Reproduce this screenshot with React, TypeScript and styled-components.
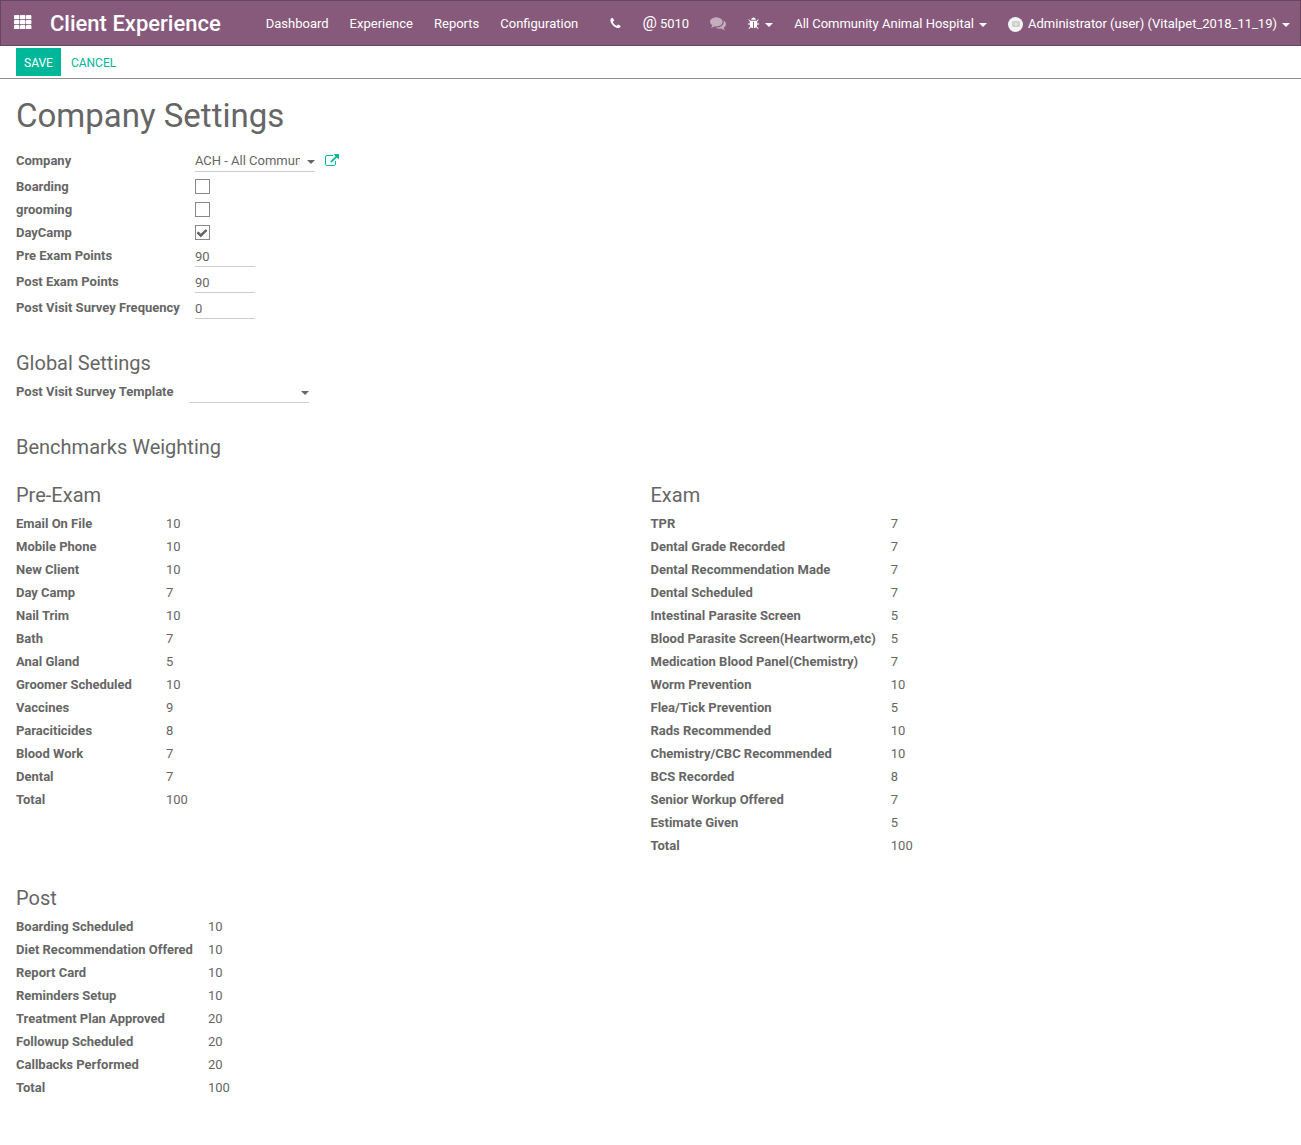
import React, { useState } from "react";
import styled, { createGlobalStyle } from "styled-components";

const GlobalStyle = createGlobalStyle`
  *, *::before, *::after { box-sizing: border-box; }
  body {
    margin: 0;
    background: #fff;
    color: #666;
    font-family: Roboto, "Liberation Sans", sans-serif;
    font-size: 13px;
    line-height: 23px;
  }
  button, input, select { font: inherit; color: inherit; }
`;

const paths = {
  phone:
    "M1600 1240q0 27-10 70.5t-21 68.5q-21 50-122 106-94 51-186 51-27 0-53-3.5t-57.5-12.5-47-14.5-55.5-20.5-49-18q-98-35-175-83-127-79-264-216t-216-264q-48-77-83-175-3-9-18-49t-20.5-55.5-14.5-47-12.5-57.5-3.5-53q0-92 51-186 56-101 106-122 25-11 68.5-21t70.5-10q14 0 21 3 18 6 53 76 11 19 30 54t35 63.5 31 53.5q3 4 17.5 25t21.5 35.5 7 28.5q0 20-28.5 50t-62 55-62 53-28.5 46q0 9 5 22.5t8.5 20.5 14 24 11.5 19q76 137 174 235t235 174q2 1 19 11.5t24 14 20.5 8.5 22.5 5q18 0 46-28.5t53-62 55-62 50-28.5q14 0 28.5 7t35.5 21.5 25 17.5q25 15 53.5 31t63.5 35 54 30q70 35 76 53 3 7 3 21z",
  comments:
    "M1408 768q0 139-94 257t-256.5 186.5-353.5 68.5q-86 0-176-16-124 88-278 128-36 9-86 16h-3q-11 0-20.5-8t-11.5-21q-1-3-1-6.5t.5-6.5 2-6l2.5-5 3.5-5.5 4-5 4.5-5 4-4.5q5-6 23-25t26-29.5 22.5-29 25-38.5 20.5-44q-124-72-195-177t-71-224q0-139 94-257t256.5-186.5 353.5-68.5 353.5 68.5 256.5 186.5 94 257zm384 256q0 120-71 224.5t-195 176.5q10 24 20.5 44t25 38.5 22.5 29 26 29.5 23 25q1 1 4 4.5t4.5 5 4 5 3.5 5.5l2.5 5 2 6 .5 6.5-1 6.5q-3 14-13 22t-22 7q-50-7-86-16-154-40-278-128-90 16-176 16-271 0-472-132 58 4 88 4 161 0 309-45t264-129q125-92 192-212t67-254q0-77-23-152 129 71 204 178t75 230z",
  bug:
    "M1696 960q0 26-19 45t-45 19h-224q0 171-67 290l208 209q19 19 19 45t-19 45q-18 19-45 19t-45-19l-198-197q-5 5-15 13t-42 28.5-65 36.5-82 29-97 13v-896h-128v896q-51 0-101.5-13.5t-87-33-66-39-43.5-32.5l-15-14-183 207q-20 21-48 21-24 0-43-16-19-18-20.5-44.5t15.5-46.5l202-227q-58-114-58-274h-224q-26 0-45-19t-19-45 19-45 45-19h224v-294l-173-173q-19-19-19-45t19-45 45-19 45 19l173 173h844l173-173q19-19 45-19t45 19 19 45-19 45l-173 173v294h224q26 0 45 19t19 45zm-480-576h-640q0-133 93.5-226.5t226.5-93.5 226.5 93.5 93.5 226.5z",
  external:
    "M1408 928v320q0 119-84.5 203.5t-203.5 84.5h-832q-119 0-203.5-84.5t-84.5-203.5v-832q0-119 84.5-203.5t203.5-84.5h704q14 0 23 9t9 23v64q0 14-9 23t-23 9h-704q-66 0-113 47t-47 113v832q0 66 47 113t113 47h832q66 0 113-47t47-113v-320q0-14 9-23t23-9h64q14 0 23 9t9 23zm384-864v512q0 26-19 45t-45 19-45-19l-176-176-652 652q-10 10-23 10t-23-10l-114-114q-10-10-10-23t10-23l652-652-176-176q-19-19-19-45t19-45 45-19h512q26 0 45 19t19 45z",
  check:
    "M1671 566q0 40-28 68l-724 724-136 136q-28 28-68 28t-68-28l-136-136-362-362q-28-28-28-68t28-68l136-136q28-28 68-28t68 28l294 295 656-657q28-28 68-28t68 28l136 136q28 28 28 68z",
};

function Icon({ name, size }: { name: keyof typeof paths; size: number }) {
  return (
    <svg width={size} height={size} viewBox="0 0 1792 1792" fill="currentColor" aria-hidden="true">
      <path d={paths[name]} />
    </svg>
  );
}

function GridIcon() {
  return (
    <svg width="18" height="14" viewBox="0 0 18 14" fill="currentColor" aria-hidden="true">
      {[0, 5, 10].map((y) =>
        [0, 6, 12].map((x) => <rect key={`${x}-${y}`} x={x} y={y} width="5.4" height="4.2" rx="0.8" />)
      )}
    </svg>
  );
}

const Navbar = styled.header`
  display: flex;
  align-items: center;
  justify-content: space-between;
  height: 46px;
  padding: 0 10px 0 13px;
  background: #875a7b;
  border: 1px solid #68465f;
  color: #fff;
  white-space: nowrap;
`;

const NavGroup = styled.nav`
  display: flex;
  align-items: center;
`;

const AppsButton = styled.button`
  display: flex;
  margin-right: 18px;
  padding: 0 0 2px;
  border: 0;
  background: none;
  cursor: pointer;
`;

const Brand = styled.a`
  margin-right: 45px;
  color: inherit;
  font-size: 22px;
  font-weight: 500;
  text-decoration: none;
`;

const Menu = styled.div`
  display: flex;
  gap: 21px;
`;

const NavLink = styled.a`
  color: inherit;
  text-decoration: none;
`;

const Tray = styled.div`
  display: flex;
  align-items: center;
  gap: 21px;
`;

const TrayButton = styled.button<{ $dim?: boolean; $gap?: number }>`
  display: flex;
  align-items: center;
  gap: ${(p) => p.$gap ?? 5}px;
  padding: 0;
  border: 0;
  background: none;
  opacity: ${(p) => (p.$dim ? 0.5 : 1)};
  cursor: pointer;
`;

const AtSign = styled.span`
  padding-bottom: 2px;
  font-size: 16px;
`;

const Caret = styled.span`
  width: 0;
  height: 0;
  margin-top: 3px;
  border: 4px solid transparent;
  border-top-color: currentColor;
  border-bottom: 0;
`;

const Avatar = styled.span`
  display: flex;
  align-items: center;
  justify-content: center;
  width: 15px;
  height: 15px;
  margin-top: 2px;
  border-radius: 50%;
  background: #f3f3f3;
  color: #cfcfcf;
`;

const ControlBar = styled.div`
  display: flex;
  align-items: center;
  gap: 2px;
  height: 33px;
  padding: 0 16px;
  border-bottom: 1px solid #8f8f8f;
`;

const ActionButton = styled.button<{ $primary?: boolean }>`
  height: 28px;
  padding: 2px 8px 0;
  border: 0;
  background: ${(p) => (p.$primary ? "#00b799" : "transparent")};
  color: ${(p) => (p.$primary ? "#fff" : "#00b799")};
  font-size: 12px;
  text-transform: uppercase;
  cursor: pointer;
`;

const Sheet = styled.main`
  padding: 19px 16px 46px;
`;

const Title = styled.h1`
  margin: 0 0 15px;
  font-size: 33px;
  font-weight: 400;
  line-height: 36px;
`;

const Heading = styled.h2`
  margin: 0 0 6px;
  font-size: 20px;
  font-weight: 400;
  line-height: 22px;
`;

const Section = styled.section`
  margin-bottom: 30px;
`;

const Fields = styled.div`
  display: grid;
  grid-template-columns: max-content 1fr;
  column-gap: 15px;
`;

const FieldLabel = styled.label`
  font-weight: 700;
`;

const FieldValue = styled.div<{ $editable?: boolean }>`
  display: flex;
  align-items: center;
  height: ${(p) => (p.$editable ? 26 : 23)}px;
  padding-bottom: ${(p) => (p.$editable ? 3 : 0)}px;
`;

const NumberInput = styled.input`
  width: 60px;
  height: 23px;
  padding: 2px 0 0;
  border: 0;
  border-bottom: 1px solid #ccc;
  border-radius: 0;
  background: none;
`;

const SelectBox = styled.span`
  position: relative;
  display: flex;
  width: 120px;
`;

const Select = styled.select`
  width: 100%;
  height: 23px;
  padding: 0 15px 0 0;
  border: 0;
  border-bottom: 1px solid #ccc;
  border-radius: 0;
  background: none;
  appearance: none;
`;

const SelectCaret = styled(Caret)`
  position: absolute;
  top: 8px;
  right: 0;
  pointer-events: none;
`;

const OpenButton = styled.button`
  display: flex;
  margin-left: 10px;
  padding: 0;
  border: 0;
  background: none;
  color: #00b799;
  cursor: pointer;
`;

const CheckWrap = styled.span`
  position: relative;
  display: flex;
  color: #666;
`;

const CheckInput = styled.input`
  width: 15px;
  height: 15px;
  margin: 0;
  border: 1px solid #888;
  appearance: none;
`;

const CheckMark = styled.span`
  position: absolute;
  inset: 0;
  display: flex;
  align-items: center;
  justify-content: center;
  pointer-events: none;
`;

const Groups = styled.div`
  display: grid;
  grid-template-columns: 1fr 1fr;
  row-gap: 30px;
  margin-top: 26px;
`;

const Table = styled.table`
  border-collapse: collapse;
`;

const NameCell = styled.th`
  min-width: 150px;
  padding: 0 15px 0 0;
  font-weight: 700;
  text-align: left;
`;

const WeightCell = styled.td`
  padding: 0;
`;

function Checkbox({ id, label, initial = false }: { id: string; label: string; initial?: boolean }) {
  const [checked, setChecked] = useState(initial);
  return (
    <>
      <FieldLabel htmlFor={id}>{label}</FieldLabel>
      <FieldValue>
        <CheckWrap>
          <CheckInput id={id} type="checkbox" checked={checked} onChange={() => setChecked(!checked)} />
          {checked && (
            <CheckMark>
              <Icon name="check" size={12} />
            </CheckMark>
          )}
        </CheckWrap>
      </FieldValue>
    </>
  );
}

function NumberField({ id, label, value }: { id: string; label: string; value: string }) {
  return (
    <>
      <FieldLabel htmlFor={id}>{label}</FieldLabel>
      <FieldValue $editable>
        <NumberInput id={id} type="text" inputMode="numeric" defaultValue={value} />
      </FieldValue>
    </>
  );
}

type Weight = [string, number];

const preExam: Weight[] = [
  ["Email On File", 10],
  ["Mobile Phone", 10],
  ["New Client", 10],
  ["Day Camp", 7],
  ["Nail Trim", 10],
  ["Bath", 7],
  ["Anal Gland", 5],
  ["Groomer Scheduled", 10],
  ["Vaccines", 9],
  ["Paraciticides", 8],
  ["Blood Work", 7],
  ["Dental", 7],
  ["Total", 100],
];

const exam: Weight[] = [
  ["TPR", 7],
  ["Dental Grade Recorded", 7],
  ["Dental Recommendation Made", 7],
  ["Dental Scheduled", 7],
  ["Intestinal Parasite Screen", 5],
  ["Blood Parasite Screen(Heartworm,etc)", 5],
  ["Medication Blood Panel(Chemistry)", 7],
  ["Worm Prevention", 10],
  ["Flea/Tick Prevention", 5],
  ["Rads Recommended", 10],
  ["Chemistry/CBC Recommended", 10],
  ["BCS Recorded", 8],
  ["Senior Workup Offered", 7],
  ["Estimate Given", 5],
  ["Total", 100],
];

const post: Weight[] = [
  ["Boarding Scheduled", 10],
  ["Diet Recommendation Offered", 10],
  ["Report Card", 10],
  ["Reminders Setup", 10],
  ["Treatment Plan Approved", 20],
  ["Followup Scheduled", 20],
  ["Callbacks Performed", 20],
  ["Total", 100],
];

function WeightGroup({ title, rows }: { title: string; rows: Weight[] }) {
  return (
    <div>
      <Heading as="h3">{title}</Heading>
      <Table>
        <tbody>
          {rows.map(([name, weight]) => (
            <tr key={name}>
              <NameCell scope="row">{name}</NameCell>
              <WeightCell>{weight}</WeightCell>
            </tr>
          ))}
        </tbody>
      </Table>
    </div>
  );
}

export default function App() {
  return (
    <>
      <GlobalStyle />
      <Navbar>
        <NavGroup>
          <AppsButton aria-label="Applications">
            <GridIcon />
          </AppsButton>
          <Brand href="#">Client Experience</Brand>
          <Menu>
            {["Dashboard", "Experience", "Reports", "Configuration"].map((item) => (
              <NavLink key={item} href="#">
                {item}
              </NavLink>
            ))}
          </Menu>
        </NavGroup>
        <Tray>
          <TrayButton aria-label="Phone">
            <Icon name="phone" size={13} />
          </TrayButton>
          <TrayButton $gap={3}>
            <AtSign>@</AtSign>5010
          </TrayButton>
          <TrayButton $dim aria-label="Conversations">
            <Icon name="comments" size={16} />
          </TrayButton>
          <TrayButton aria-label="Debug">
            <Icon name="bug" size={13} />
            <Caret />
          </TrayButton>
          <TrayButton>
            All Community Animal Hospital
            <Caret />
          </TrayButton>
          <TrayButton>
            <Avatar>
              <svg width="8" height="6" viewBox="0 0 8 6" aria-hidden="true">
                <rect width="8" height="6" rx="1.5" fill="currentColor" />
                <circle cx="4" cy="3" r="1.5" fill="#e6e6e6" />
              </svg>
            </Avatar>
            Administrator (user) (Vitalpet_2018_11_19)
            <Caret />
          </TrayButton>
        </Tray>
      </Navbar>

      <ControlBar>
        <ActionButton $primary>Save</ActionButton>
        <ActionButton>Cancel</ActionButton>
      </ControlBar>

      <Sheet>
        <Title>Company Settings</Title>
        <Section>
          <Fields>
            <FieldLabel htmlFor="company">Company</FieldLabel>
            <FieldValue $editable>
              <SelectBox>
                <Select id="company">
                  <option>ACH - All Community Animal Hospital</option>
                </Select>
                <SelectCaret />
              </SelectBox>
              <OpenButton aria-label="Open company">
                <Icon name="external" size={14} />
              </OpenButton>
            </FieldValue>
            <Checkbox id="boarding" label="Boarding" />
            <Checkbox id="grooming" label="grooming" />
            <Checkbox id="daycamp" label="DayCamp" initial />
            <NumberField id="pre-points" label="Pre Exam Points" value="90" />
            <NumberField id="post-points" label="Post Exam Points" value="90" />
            <NumberField id="frequency" label="Post Visit Survey Frequency" value="0" />
          </Fields>
        </Section>

        <Section>
          <Heading>Global Settings</Heading>
          <Fields>
            <FieldLabel htmlFor="template">Post Visit Survey Template</FieldLabel>
            <FieldValue $editable>
              <SelectBox>
                <Select id="template">
                  <option aria-label="None"></option>
                </Select>
                <SelectCaret />
              </SelectBox>
            </FieldValue>
          </Fields>
        </Section>

        <Heading>Benchmarks Weighting</Heading>
        <Groups>
          <WeightGroup title="Pre-Exam" rows={preExam} />
          <WeightGroup title="Exam" rows={exam} />
          <WeightGroup title="Post" rows={post} />
        </Groups>
      </Sheet>
    </>
  );
}
